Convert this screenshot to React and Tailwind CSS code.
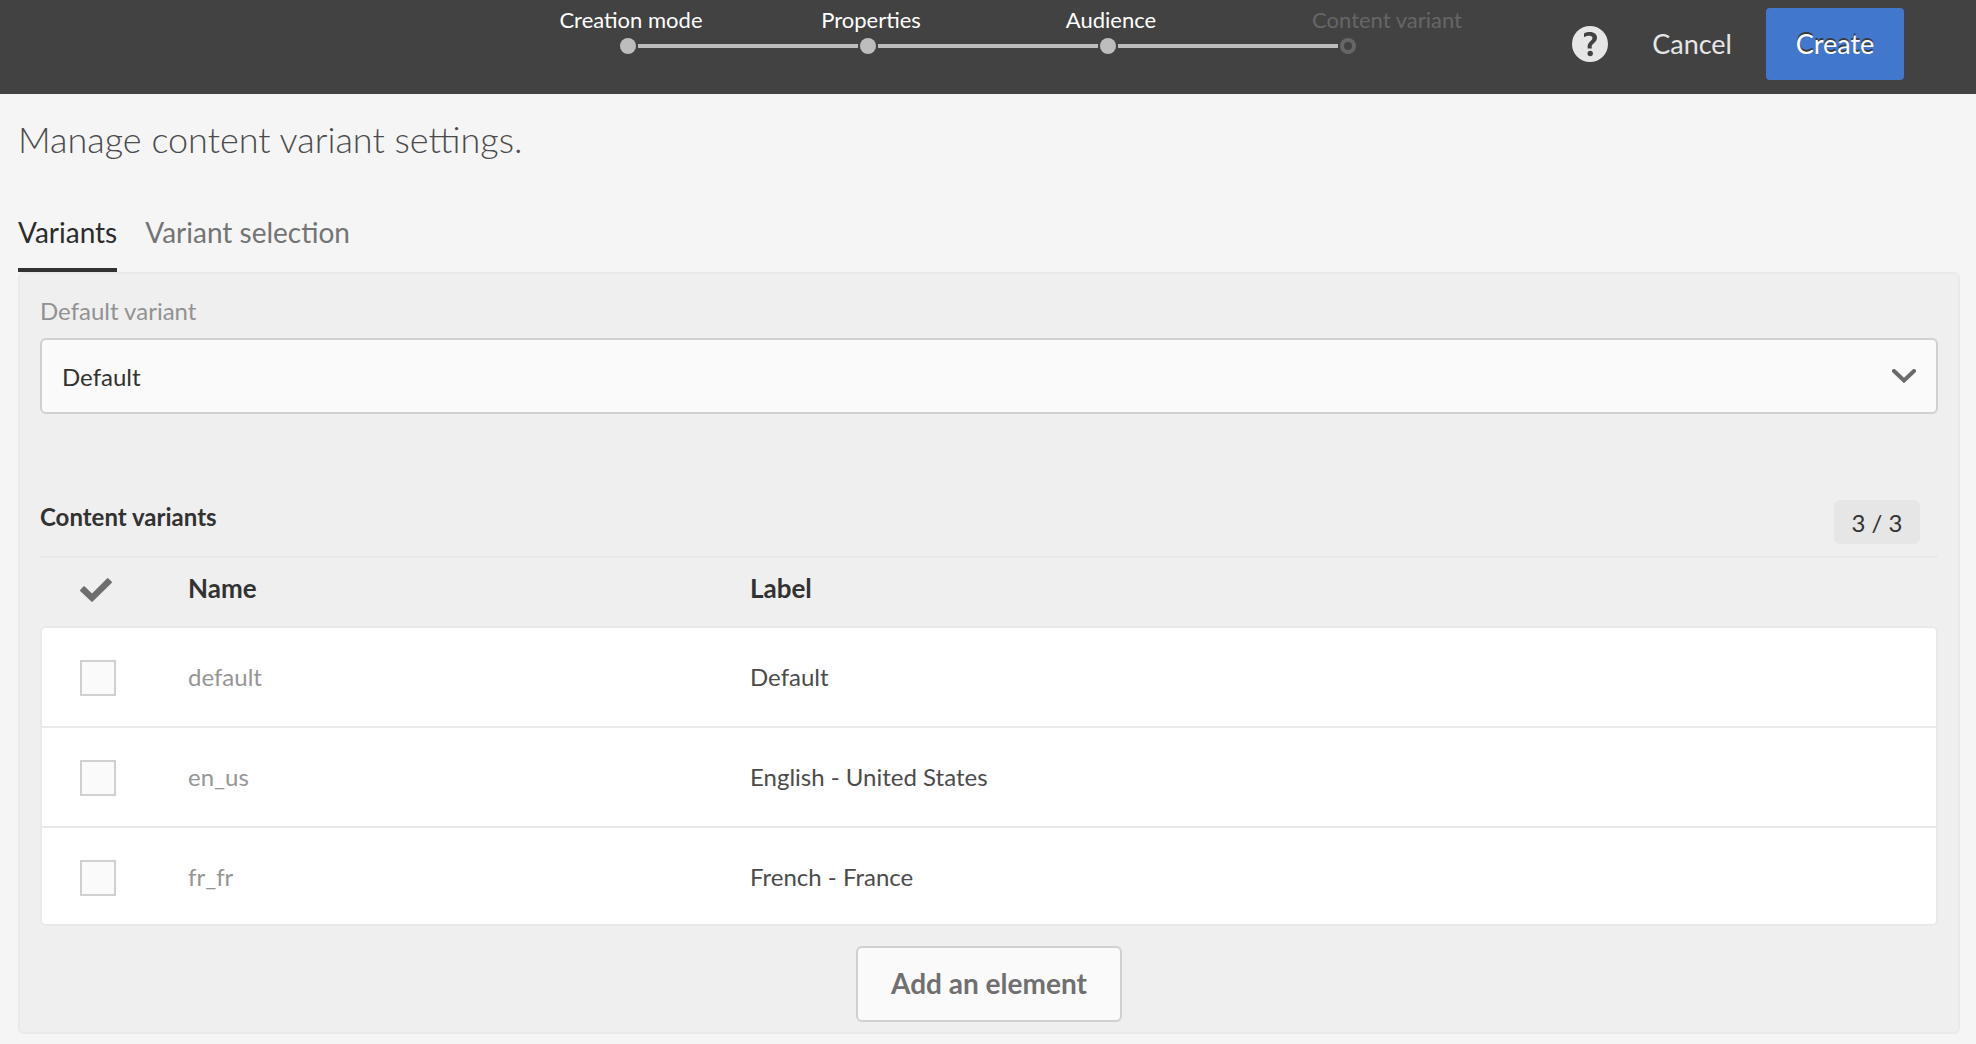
import { useState } from "react";

const STEPS = [
  { label: "Creation mode", done: true },
  { label: "Properties", done: true },
  { label: "Audience", done: true },
  { label: "Content variant", done: false },
];

const VARIANTS = [
  { name: "default", label: "Default" },
  { name: "en_us", label: "English - United States" },
  { name: "fr_fr", label: "French - France" },
];

function HelpIcon() {
  return (
    <svg viewBox="0 0 36 36" className="size-9" aria-hidden="true">
      <circle cx="18" cy="18" r="18" fill="#e6e6e6" />
      <path
        d="M12 7.400C13.600 6.500 15.800 6 18 6c4.200 0 7 2.300 7 5.600 0 2.500-1.300 4.100-3.200 5.700-1.500 1.300-2.200 2.200-2.100 3.500v1.800h-4l-.1-2c-.1-1.900.8-3.400 2.500-5 1.500-1.400 2.300-2.200 2.300-3.500 0-1.400-1-2.300-2.900-2.300-1.800 0-3.500.5-5.500 1.400z"
        fill="#424242"
      />
      <circle cx="18.200" cy="27.500" r="2.700" fill="#424242" />
    </svg>
  );
}

function CheckIcon() {
  return (
    <svg viewBox="0 0 32 24" className="h-6 w-8" role="img" aria-label="Selected">
      <path
        d="M.4 13.200a1 1 0 0 1 0-1.400l3-3.200a1 1 0 0 1 1.400 0L12 15.500 27 .4a1 1 0 0 1 1.400 0l3.200 3.200a1 1 0 0 1 0 1.400L12.700 23.600a1 1 0 0 1-1.400 0z"
        fill="#6e6e6e"
      />
    </svg>
  );
}

function ChevronIcon() {
  return (
    <svg viewBox="0 0 24 14" className="h-3.5 w-6" aria-hidden="true">
      <path d="M2 2l10 9.500L22 2" fill="none" stroke="#6b6b6b" strokeWidth="4" strokeLinecap="round" />
    </svg>
  );
}

function Stepper() {
  return (
    <nav aria-label="Progress" className="w-[960px] pt-1">
      <ol className="grid grid-cols-4 text-[22px] leading-8">
        {STEPS.map((s) => (
          <li
            key={s.label}
            aria-current={s.done ? undefined : "step"}
            className={s.done ? "pl-1.5 text-center text-white" : "pr-1.5 text-right text-[#666666]"}
          >
            {s.label}
          </li>
        ))}
      </ol>
      <div className="mt-0.5 flex items-center gap-0.5 px-28" aria-hidden="true">
        {STEPS.map((s, i) => (
          <div key={s.label} className={i > 0 ? "flex flex-1 items-center gap-0.5" : "flex"}>
            {i > 0 && <div className="h-1 flex-1 bg-[#bdbdbd]" />}
            <div
              className={
                s.done
                  ? "size-4 rounded-full bg-[#bdbdbd]"
                  : "size-4 rounded-full border-4 border-[#666666]"
              }
            />
          </div>
        ))}
      </div>
    </nav>
  );
}

export default function App() {
  const [tab, setTab] = useState(0);
  return (
    <div className="min-h-screen bg-[#f5f5f5] pb-2.5 font-['Lato',sans-serif] text-[24px] leading-8 text-[#4b4b4b]">
      <header className="grid h-[94px] grid-cols-[1fr_auto_1fr] bg-[#424242]">
        <div />
        <Stepper />
        <div className="flex items-center justify-end pr-[72px] pb-1.5 text-[27px]">
          <button type="button" aria-label="Help" className="mr-11">
            <HelpIcon />
          </button>
          <button type="button" className="mr-[34px] text-[#e6e6e6]">
            Cancel
          </button>
          <button
            type="button"
            className="h-[72px] w-[138px] rounded bg-[#4178cd] text-white text-shadow-[0_-2px_0_#3a3a3a]"
          >
            Create
          </button>
        </div>
      </header>

      <main className="mr-4 ml-[18px]">
        <h1 className="pt-[22px] text-[36px] leading-[46px] font-light">Manage content variant settings.</h1>

        <div role="tablist" className="mt-[50px] flex gap-7 text-[28px] leading-10">
          {["Variants", "Variant selection"].map((t, i) => (
            <button
              key={t}
              type="button"
              role="tab"
              aria-selected={tab === i}
              onClick={() => setTab(i)}
              className={
                tab === i
                  ? "border-b-4 border-[#323232] pb-4 text-[#2c2c2c]"
                  : "border-b-4 border-transparent pb-4 text-[#747474]"
              }
            >
              {t}
            </button>
          ))}
        </div>

        <section className="rounded-md border-2 border-[#e9e9e9] bg-[#efefef] px-5 pt-[21px] pb-2.5">
          <label htmlFor="default-variant" className="block text-[#929292]">
            Default variant
          </label>
          <div className="mt-[11px] grid">
            <select
              id="default-variant"
              className="col-start-1 row-start-1 h-[76px] w-full appearance-none rounded-md border-2 border-[#d0d0d0] bg-[#fafafa] px-5 pt-0.5 text-[#323232]"
            >
              {VARIANTS.map((v) => (
                <option key={v.name}>{v.label}</option>
              ))}
            </select>
            <div className="pointer-events-none col-start-1 row-start-1 mr-[22px] self-center justify-self-end">
              <ChevronIcon />
            </div>
          </div>

          <div className="mt-[86px] flex items-start justify-between border-b-2 border-[#e9e9e9] pb-3">
            <h2 className="leading-[34px] font-bold text-[#323232]">Content variants</h2>
            <span className="mr-[18px] flex h-11 w-[86px] items-center justify-center rounded-md bg-[#e6e6e6] pt-0.5 text-[#323232]">
              3 / 3
            </span>
          </div>

          <table className="w-full table-fixed border-separate border-spacing-0 text-left">
            <thead>
              <tr className="h-[68px] text-[26px] text-[#323232]">
                <th className="w-[148px] pb-1 pl-10">
                  <CheckIcon />
                </th>
                <th className="w-[562px] pb-2 font-bold">Name</th>
                <th className="pb-2 font-bold">Label</th>
              </tr>
            </thead>
            <tbody className="align-top leading-[34px]">
              {VARIANTS.map((v) => (
                <tr key={v.name} className="group h-[100px]">
                  <td className="border-t-2 border-l-2 border-[#e9e9e9] bg-white pt-8 pl-[38px] group-first:rounded-tl-md group-last:rounded-bl-md group-last:border-b-2">
                    <input
                      type="checkbox"
                      aria-label={v.name}
                      className="block size-9 appearance-none border-2 border-[#d0d0d0] bg-[#fafafa] checked:bg-[#4178cd]"
                    />
                  </td>
                  <td className="border-t-2 border-[#e9e9e9] bg-white pt-8 text-[#969696] group-last:border-b-2">
                    {v.name}
                  </td>
                  <td className="border-t-2 border-r-2 border-[#e9e9e9] bg-white pt-8 group-first:rounded-tr-md group-last:rounded-br-md group-last:border-b-2">
                    {v.label}
                  </td>
                </tr>
              ))}
            </tbody>
          </table>

          <div className="mt-5 flex justify-center">
            <button
              type="button"
              className="h-[76px] w-[266px] rounded-md border-2 border-[#d0d0d0] bg-[#fafafa] pb-0.5 text-[28px] font-bold text-[#707070]"
            >
              Add an element
            </button>
          </div>
        </section>
      </main>
    </div>
  );
}
